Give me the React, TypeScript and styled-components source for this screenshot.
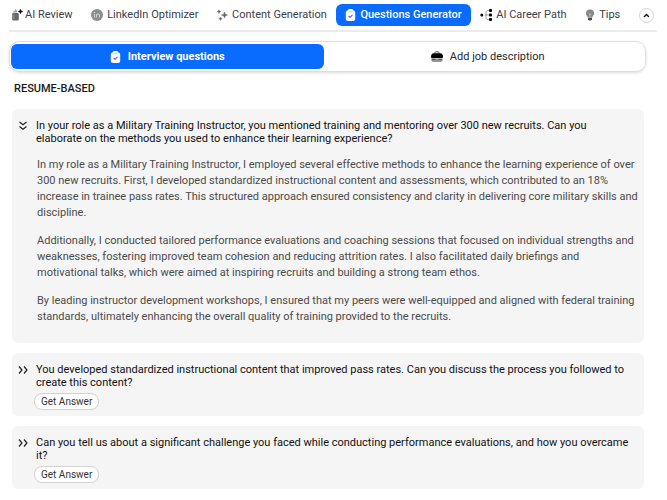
import React, { useState } from "react";
import styled, { createGlobalStyle } from "styled-components";

const GlobalStyle = createGlobalStyle`
  * { box-sizing: border-box; }
  body { margin: 0; background: #fff; color: #1b1b1b; font-family: Roboto, "Liberation Sans", sans-serif; }
  button { font-family: inherit; cursor: pointer; }
  svg { display: block; flex: none; }
`;

const Page = styled.div`
  padding: 0 10px 10px 9px;
`;

const Nav = styled.nav`
  display: flex;
  align-items: center;
  justify-content: space-between;
  height: 32px;
  padding: 0 3px 0 0;
  border-bottom: 2px solid #ebebeb;
`;

const NavItem = styled.button<{ $active?: boolean }>`
  display: flex;
  align-items: center;
  gap: 4px;
  height: 22px;
  padding: 0 9px;
  border: 0;
  border-radius: 6px;
  background: ${(p) => (p.$active ? "#0a6cff" : "transparent")};
  color: ${(p) => (p.$active ? "#fff" : "#3c4047")};
  font-size: 11px;
  font-weight: ${(p) => (p.$active ? 500 : 400)};
  line-height: 16px;
  white-space: nowrap;
  &:first-child { padding-left: 2px; gap: 2px; }
`;

const Collapse = styled.button`
  display: grid;
  place-items: center;
  width: 15px;
  height: 15px;
  margin-left: 9px;
  padding: 0;
  border: 1px solid #d4d4d4;
  border-radius: 50%;
  background: #fff;
`;

const Main = styled.main`
  padding-right: 11px;
`;

const Switcher = styled.div`
  display: grid;
  grid-template-columns: 1fr 1fr;
  gap: 8px;
  height: 31px;
  margin-top: 9px;
  padding: 2px 1px;
  border: 1px solid #dedede;
  border-radius: 10px;
  box-shadow: 0 1px 3px rgba(0, 0, 0, 0.14);
`;

const SwitchButton = styled.button<{ $active: boolean }>`
  display: flex;
  align-items: center;
  justify-content: center;
  gap: 7px;
  padding: 0;
  border: 0;
  border-radius: 6px;
  background: ${(p) => (p.$active ? "#0a6cff" : "transparent")};
  color: ${(p) => (p.$active ? "#fff" : "#25282c")};
  font-size: 11px;
  font-weight: ${(p) => (p.$active ? 700 : 400)};
`;

const Heading = styled.h2`
  margin: 9px 0 12px 5px;
  font-size: 11px;
  font-weight: 500;
  line-height: 16px;
`;

const List = styled.div`
  display: flex;
  flex-direction: column;
  gap: 10px;
  padding: 0 2px 0 3px;
`;

const Card = styled.article`
  padding: 10px 6px 6px;
  border-radius: 6px;
  background: #f5f5f5;
`;

const Question = styled.button`
  display: flex;
  align-items: flex-start;
  gap: 8px;
  width: 100%;
  padding: 0 8px 0 0;
  border: 0;
  background: none;
  color: #111;
  font-size: 11px;
  line-height: 13px;
  text-align: left;
  svg { margin-top: 2px; }
`;

const Answer = styled.div`
  display: flex;
  flex-direction: column;
  gap: 12px;
  padding: 12px 0 12px 19px;
`;

const Paragraph = styled.p`
  margin: 0;
  color: #4b4b4b;
  font-size: 11px;
  line-height: 16px;
`;

const GetAnswer = styled.button`
  display: block;
  height: 17px;
  margin: 4px 0 0 16px;
  padding: 0 6px;
  border: 1px solid #d2d2d2;
  border-radius: 8px;
  background: #fff;
  color: #333;
  font-size: 10px;
  line-height: 14px;
`;

const ReviewIcon = () => (
  <svg width="12" height="14" viewBox="0 0 12 14" aria-hidden="true">
    <rect x="1.200" y="5" width="6.600" height="7.500" rx="1.300" fill="#66686c" />
    <path d="M2.200 4.500V3.200l1.800-.7V1.200h1.300v1.300h1v2z" fill="#a2a4a7" />
    <path d="M2.800 6.500v4.500" stroke="#999b9e" />
    <path d="M9.500 1.400l.6 1.500 1.500.6-1.500.6-.6 1.500-.6-1.500-1.500-.6 1.500-.6z" fill="#000" stroke="#000" strokeWidth=".7" />
  </svg>
);

const LinkedInIcon = () => (
  <svg width="12" height="12" viewBox="0 0 12 12" aria-hidden="true">
    <circle cx="6" cy="6" r="6" fill="#8c8d90" />
    <path d="M3.500 5v3.500M5.500 8.500V5M5.500 6.500c0-2 3-2 3 0v2" fill="none" stroke="#cfcfd1" strokeWidth="1.100" />
    <circle cx="3.500" cy="3.500" r=".7" fill="#cfcfd1" />
  </svg>
);

const SparkleIcon = () => (
  <svg width="11" height="12" viewBox="0 0 11 12" aria-hidden="true">
    <g fill="#66686b" stroke="#66686b" strokeWidth=".4">
      <path d="M7.500 3l.9 2.200 2.200.8-2.200.9-.9 2.200-.9-2.200L4.400 6l2.200-.8z" />
      <path d="M2 .8l.6 1.300 1.300.6-1.300.6L2 4.600l-.6-1.300L.2 2.700l1.200-.6z" />
      <path d="M3.500 8l.6 1.200 1.200.5-1.200.6-.6 1.200-.6-1.200-1.200-.6 1.200-.5z" />
    </g>
  </svg>
);

const ClipboardIcon = () => (
  <svg width="11" height="12" viewBox="0 0 11 12" aria-hidden="true">
    <rect x=".8" y="1.200" width="9.400" height="10.800" rx="2.500" fill="#fff" />
    <rect x="3" y="0" width="5" height="3" rx="1.200" fill="#fff" />
    <path d="M3.500 2.800h4" stroke="#8db8ff" strokeWidth=".8" />
    <path d="M3.600 7l1.400 1.300 2.500-2.500" fill="none" stroke="#5a50f0" strokeWidth="1.100" />
  </svg>
);

const PathIcon = () => (
  <svg width="12" height="12" viewBox="0 0 12 12" aria-hidden="true">
    <path d="M9.500 1.500H8C6 1.500 6 3 6 4v4c0 1 0 2.500 2 2.500h1.500M4.500 6h5" fill="none" stroke="#888" strokeWidth=".8" />
    <circle cx="1.800" cy="6" r="1.500" />
    <rect x="9" y="0" width="3" height="3" rx="1" />
    <rect x="9" y="4.500" width="3" height="3" rx="1" />
    <rect x="9" y="9" width="3" height="3" rx="1" />
  </svg>
);

const BulbIcon = () => (
  <svg width="10" height="12" viewBox="0 0 10 12" aria-hidden="true">
    <path d="M5 .5a4 4 0 0 1 4 4C9 6.500 7.500 7 7.200 8.500H2.800C2.500 7 1 6.500 1 4.500a4 4 0 0 1 4-4z" fill="#85878a" />
    <path d="M5 8V5M3.700 4.300L5 5.500l1.300-1.200" stroke="#ccc" strokeWidth=".8" fill="none" />
    <path d="M3 8.800h4v1.500L6 11.500H4L3 10.300z" fill="#4a4c4f" />
  </svg>
);

const BriefcaseIcon = () => (
  <svg width="12" height="12" viewBox="0 0 12 12" aria-hidden="true">
    <path d="M3.800 2.500C3.800 1 4.500.8 6 .8s2.200.2 2.200 1.700" fill="none" stroke="#444" />
    <path d="M2.500 2.300h7c1.300 0 2.500 1.700 2.500 3.200 0 1-.5 1.500-1 1.500H1C.5 7 0 6.500 0 5.500c0-1.500 1.200-3.200 2.500-3.200z" fill="#000" />
    <path d="M.3 7.500h11.400v1c0 1.500-.7 2.500-2 2.500H2.300C1 11 .3 10 .3 8.500z" fill="#949494" />
    <path d="M1 8.300h3.500M7.500 8.300H11" stroke="#444" />
  </svg>
);

const ChevronUp = () => (
  <svg width="7" height="5" viewBox="0 0 7 5" aria-hidden="true">
    <path d="M1 4l2.500-2.500L6 4" fill="none" stroke="#111" strokeWidth="1.400" />
  </svg>
);

const DoubleChevron = ({ open }: { open: boolean }) => (
  <svg width="10" height="10" viewBox="0 0 10 10" aria-hidden="true">
    <path
      d={open ? "M1.500 1L5 3.800 8.500 1M1.500 5.500L5 8.300l3.500-2.800" : "M1 1.500L4 5 1 8.500M6 1.500L9 5 6 8.500"}
      fill="none"
      stroke="#222"
      strokeWidth="1.200"
    />
  </svg>
);

const tabs = [
  { label: "AI Review", Icon: ReviewIcon },
  { label: "LinkedIn Optimizer", Icon: LinkedInIcon },
  { label: "Content Generation", Icon: SparkleIcon },
  { label: "Questions Generator", Icon: ClipboardIcon, active: true },
  { label: "AI Career Path", Icon: PathIcon },
  { label: "Tips", Icon: BulbIcon },
];

const questions = [
  {
    text: "In your role as a Military Training Instructor, you mentioned training and mentoring over 300 new recruits. Can you elaborate on the methods you used to enhance their learning experience?",
    answer: [
      "In my role as a Military Training Instructor, I employed several effective methods to enhance the learning experience of over 300 new recruits. First, I developed standardized instructional content and assessments, which contributed to an 18% increase in trainee pass rates. This structured approach ensured consistency and clarity in delivering core military skills and discipline.",
      "Additionally, I conducted tailored performance evaluations and coaching sessions that focused on individual strengths and weaknesses, fostering improved team cohesion and reducing attrition rates. I also facilitated daily briefings and motivational talks, which were aimed at inspiring recruits and building a strong team ethos.",
      "By leading instructor development workshops, I ensured that my peers were well-equipped and aligned with federal training standards, ultimately enhancing the overall quality of training provided to the recruits.",
    ],
  },
  {
    text: "You developed standardized instructional content that improved pass rates. Can you discuss the process you followed to create this content?",
  },
  {
    text: "Can you tell us about a significant challenge you faced while conducting performance evaluations, and how you overcame it?",
  },
];

export default function App() {
  const [view, setView] = useState<"questions" | "job">("questions");

  return (
    <Page>
      <GlobalStyle />
      <Nav>
        {tabs.map(({ label, Icon, active }) => (
          <NavItem key={label} $active={active} aria-current={active ? "page" : undefined}>
            <Icon />
            {label}
          </NavItem>
        ))}
        <Collapse aria-label="Collapse">
          <ChevronUp />
        </Collapse>
      </Nav>
      <Main>
        <Switcher>
          <SwitchButton $active={view === "questions"} onClick={() => setView("questions")}>
            <ClipboardIcon />
            Interview questions
          </SwitchButton>
          <SwitchButton $active={view === "job"} onClick={() => setView("job")}>
            <BriefcaseIcon />
            Add job description
          </SwitchButton>
        </Switcher>
        <Heading>RESUME-BASED</Heading>
        <List>
          {questions.map(({ text, answer }) => (
            <Card key={text}>
              <Question aria-expanded={Boolean(answer)}>
                <DoubleChevron open={Boolean(answer)} />
                <span>{text}</span>
              </Question>
              {answer ? (
                <Answer>
                  {answer.map((paragraph) => (
                    <Paragraph key={paragraph}>{paragraph}</Paragraph>
                  ))}
                </Answer>
              ) : (
                <GetAnswer>Get Answer</GetAnswer>
              )}
            </Card>
          ))}
        </List>
      </Main>
    </Page>
  );
}
